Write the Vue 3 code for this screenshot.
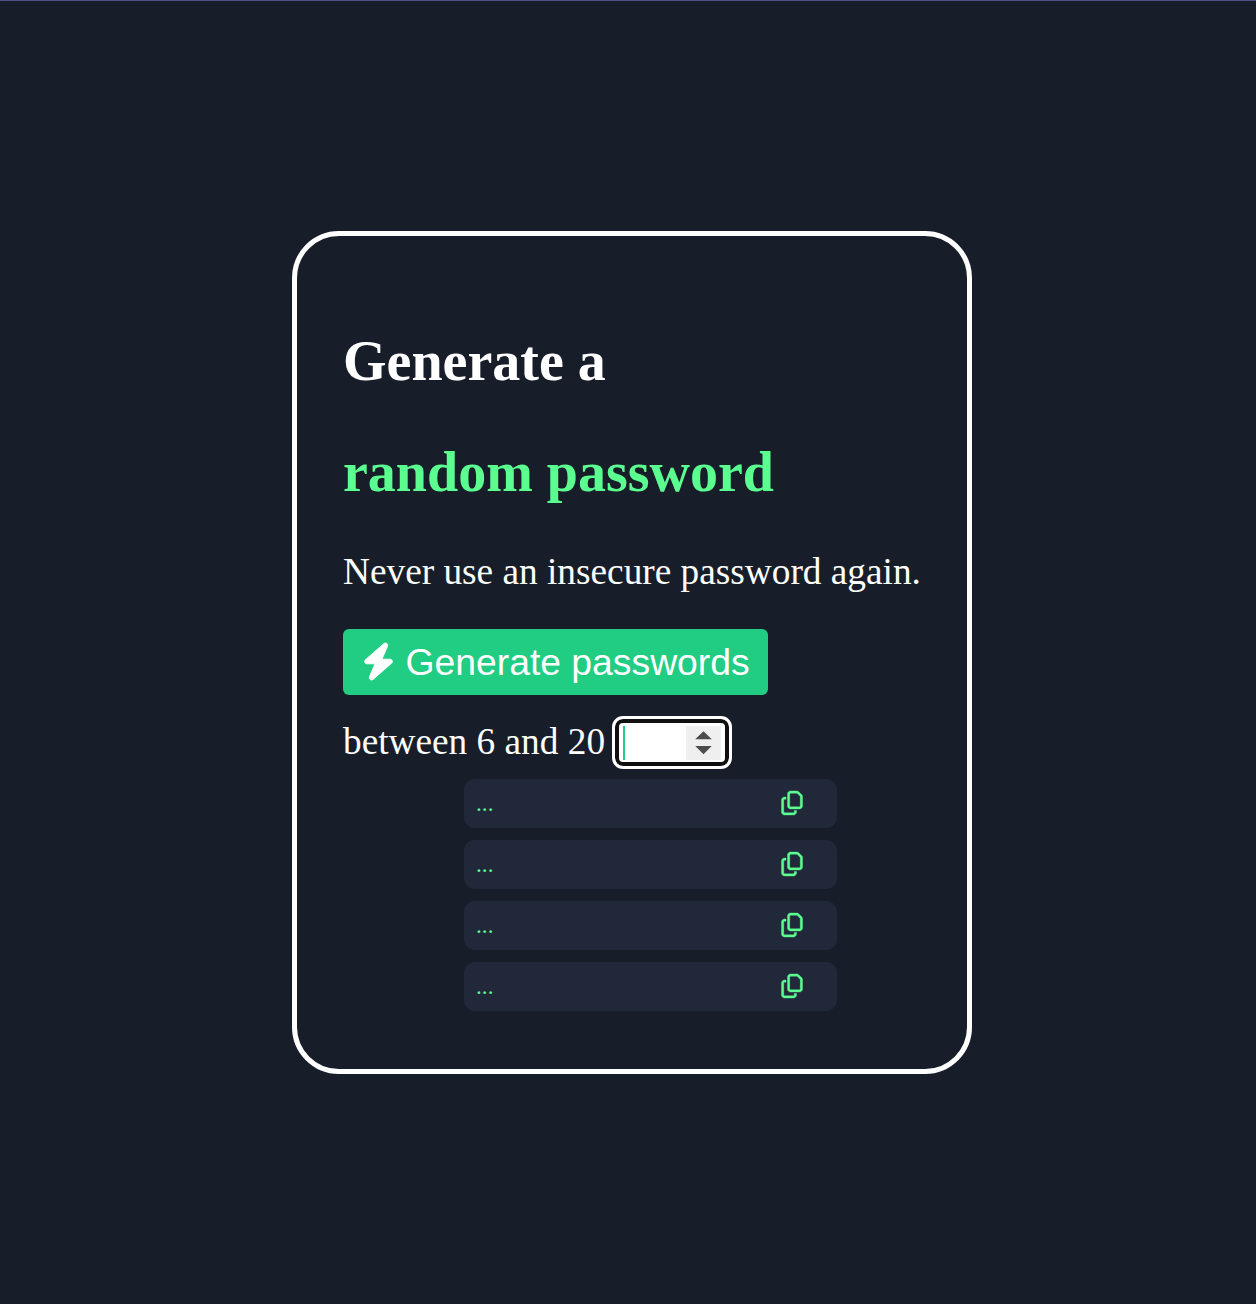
<script setup>
import { ref } from 'vue'

const passwords = ref(['...', '...', '...', '...'])
</script>

<template>
  <main class="page">
    <section class="card">
      <h1>Generate a</h1>
      <h1 class="accent">random password</h1>
      <p class="lead">Never use an insecure password again.</p>
      <button class="generate" type="button">
        <svg class="bolt" viewBox="0 0 448 512" aria-hidden="true">
          <path d="M349.4 44.6c5.9-13.7 1.5-29.7-10.6-38.5s-28.6-8-39.9 1.8l-256 224c-10 8.8-13.6 22.9-8.9 35.3S50.7 288 64 288H175.5L98.6 467.4c-5.9 13.7-1.5 29.7 10.6 38.5s28.6 8 39.9-1.8l256-224c10-8.8 13.6-22.9 8.9-35.3s-16.6-20.7-30-20.7H272.5L349.4 44.6z" />
        </svg>
        <span>Generate passwords</span>
      </button>
      <div class="length">
        <span class="length-label">between 6 and 20</span>
        <div class="field">
          <i class="caret"></i>
          <div class="spinner">
            <svg viewBox="0 0 36 34" aria-hidden="true">
              <path d="M9.5 13.7 18 5.3 26.5 13.7ZM9.5 20.5H26.5L18 29Z" />
            </svg>
          </div>
        </div>
      </div>
      <ul class="list">
        <li v-for="(password, i) in passwords" :key="i">
          <span>{{ password }}</span>
          <svg class="copy" viewBox="0 0 448 512" aria-hidden="true">
            <path d="M384 336H192c-8.800 0-16-7.200-16-16V64c0-8.800 7.200-16 16-16l140.100 0L400 115.900V320c0 8.800-7.200 16-16 16zM192 384H384c35.300 0 64-28.700 64-64V115.900c0-12.700-5.100-24.900-14.100-33.900L366.100 14.100c-9-9-21.200-14.100-33.900-14.100H192c-35.300 0-64 28.700-64 64V320c0 35.300 28.700 64 64 64zM64 128c-35.300 0-64 28.700-64 64V448c0 35.300 28.700 64 64 64H256c35.300 0 64-28.700 64-64V416H272v32c0 8.800-7.200 16-16 16H64c-8.800 0-16-7.200-16-16V192c0-8.800 7.200-16 16-16H96V128H64z" />
          </svg>
        </li>
      </ul>
    </section>
  </main>
</template>

<style>
body {
  background: #181e29;
}
</style>

<style scoped>
.page {
  box-sizing: border-box;
  height: 1304px;
  padding: 230px 0 0 292px;
  border-top: 1px solid #514f87;
  background: #181e29;
  color: #fff;
  font-family: "Liberation Serif", "Times New Roman", serif;
  font-size: 37.3px;
}

.card {
  box-sizing: border-box;
  width: 680px;
  height: 843px;
  padding: 93px 46px 0;
  border: 5px solid #fff;
  border-radius: 47px;
  display: flex;
  flex-direction: column;
  align-items: flex-start;
  white-space: nowrap;
}

h1 {
  margin: 0 0 47px;
  font-size: 56px;
  font-weight: 700;
  line-height: 64px;
}

.accent {
  margin-bottom: 46px;
  color: #5bff90;
}

.lead {
  margin: 0;
  line-height: 44px;
}

.generate {
  box-sizing: border-box;
  width: 425px;
  height: 66px;
  margin: 35px 0 0;
  padding: 0 0 0 18.5px;
  border: 0;
  border-radius: 6px;
  display: flex;
  align-items: center;
  gap: 11px;
  background: #20cd82;
  color: #fff;
  font-family: "Liberation Sans", Arial, sans-serif;
  font-size: 37.3px;
}

.bolt {
  width: 33px;
  height: 37px;
  margin-bottom: 2px;
  flex: none;
  overflow: visible;
  fill: #fff;
  stroke: #fff;
  stroke-width: 12;
}

.length {
  display: flex;
  align-items: center;
  margin-top: 21px;
  gap: 7px;
}

.length-label {
  margin-bottom: 2px;
  line-height: 44px;
}

.field {
  box-sizing: border-box;
  width: 120px;
  height: 53px;
  padding: 0 8px;
  border: 3px solid #fff;
  border-radius: 11px;
  display: flex;
  justify-content: space-between;
  align-items: center;
  background: #fff;
  box-shadow: inset 0 0 0 4px #101010;
}

.caret {
  width: 2px;
  height: 34px;
  background: #20cd82;
}

.spinner {
  width: 35px;
  height: 34px;
  background: #efefef;
}

.spinner svg {
  display: block;
  fill: #4d4d4d;
}

.list {
  margin: 10px 0 0 121px;
  padding: 0;
  display: flex;
  flex-direction: column;
  gap: 12px;
  list-style: none;
}

li {
  box-sizing: border-box;
  width: 373px;
  height: 49px;
  padding: 0 34px 0 12px;
  border-radius: 11px;
  display: flex;
  align-items: center;
  justify-content: space-between;
  background: #21283a;
  color: #5bff90;
  font-size: 23.3px;
}

.copy {
  width: 22px;
  height: 24px;
  margin-bottom: 2px;
  overflow: visible;
  fill: #5bff90;
  stroke: #5bff90;
  stroke-width: 8;
}
</style>
